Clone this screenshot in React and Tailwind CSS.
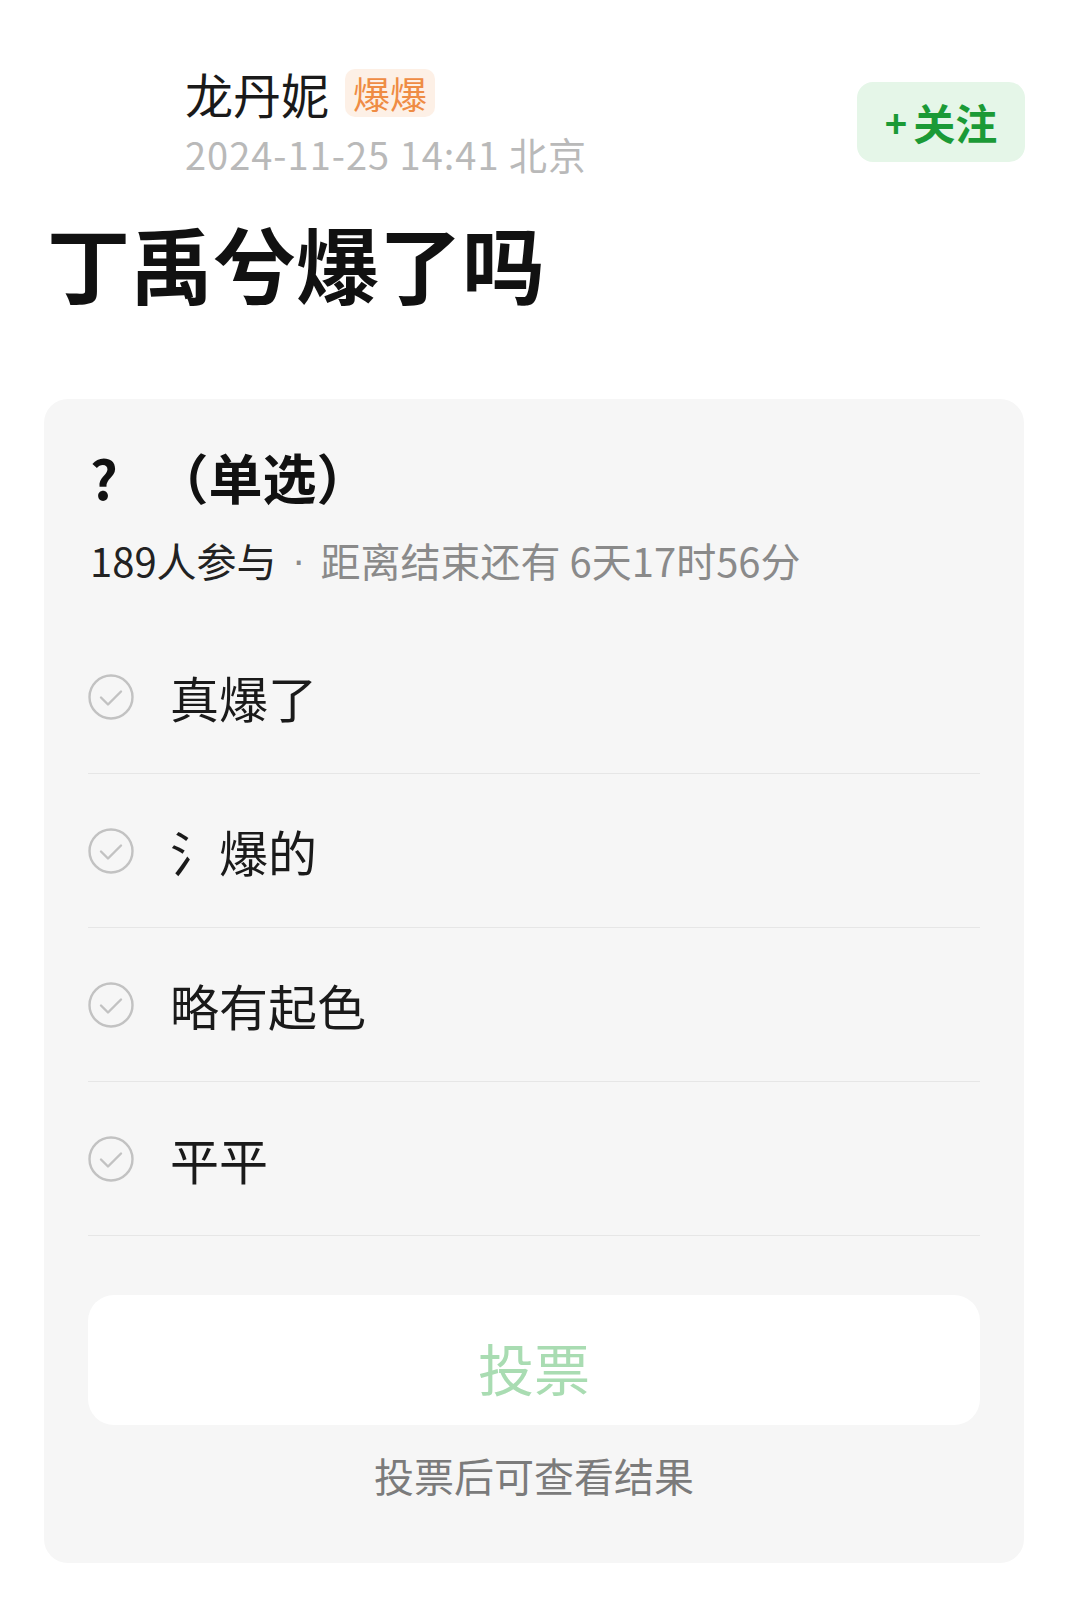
import React from "react";

const options = ["真爆了", "氵爆的", "略有起色", "平平"];

const CheckCircle = () => (
  <svg width="46" height="46" viewBox="0 0 46 46" fill="none">
    <circle cx="23" cy="23" r="21.5" stroke="#c2c2c2" strokeWidth="2.4" />
    <path
      d="M13 23.5 L20 30.5 L33 17.5"
      stroke="#c2c2c2"
      strokeWidth="2.4"
      strokeLinecap="round"
      strokeLinejoin="round"
    />
  </svg>
);

const App = () => {
  return (
    <div className="w-[1068px] min-h-[1602px] bg-white font-['Noto_Sans_CJK_SC',sans-serif] text-[#1a1a1a]">
      {/* header */}
      <div className="flex items-start pt-[64px] pl-[49px] pr-[43px]">
        <div className="w-[112px] h-[112px] shrink-0" />
        <div className="ml-[24px] flex-1">
          <div className="flex items-center h-[58px]">
            <span className="text-[48px] leading-[58px]">龙丹妮</span>
            <span className="ml-[16px] px-[8px] rounded-[10px] bg-[#fdf0e6] text-[#ef8c44] text-[37px] leading-[48px]">
              爆爆
            </span>
          </div>
          <div className="mt-[10px] text-[38px] leading-[44px] tracking-[1px] text-[#b9b9b9]">
            2024-11-25 14:41 北京
          </div>
        </div>
        <button className="mt-[18px] w-[168px] h-[80px] rounded-[16px] bg-[#e5f6e8] text-[#1b9a36] font-bold text-[42px] leading-none flex items-center justify-center">
          <span className="text-[38px] mr-[6px]">+</span>关注
        </button>
      </div>

      {/* title */}
      <h1 className="mt-[41px] pl-[47px] text-[83px] leading-[90px] font-bold text-[#111]">
        丁禹兮爆了吗
      </h1>

      {/* vote card */}
      <div className="mt-[92px] mx-[44px] rounded-[24px] bg-[#f6f6f6] pt-[46px] pb-[64px] px-[44px]">
        <div className="text-[54px] leading-[64px] font-bold text-[#111] pl-[2px]">
          ?&nbsp;&nbsp;&nbsp;（单选）
        </div>
        <div className="mt-[27px] text-[40px] leading-[48px] pl-[2px] flex items-center">
          <span className="text-[#222]">189人参与</span>
          <span className="inline-block w-[44px] text-center text-[#8a8a8a] font-['Liberation_Sans',sans-serif]">·</span>
          <span className="text-[#8a8a8a]">距离结束还有 6天17时56分</span>
        </div>

        <div className="mt-[36px]">
          {options.map((o) => (
            <div
              key={o}
              className="h-[154px] flex items-center border-b border-[#e6e6e6]"
            >
              <CheckCircle />
              <span className="ml-[36px] text-[49px] leading-none text-[#1a1a1a]">
                {o}
              </span>
            </div>
          ))}
        </div>

        <button className="mt-[59px] w-full h-[130px] pt-[14px] rounded-[26px] bg-white text-[56px] text-[#a9dcb2] flex items-center justify-center">
          投票
        </button>
        <div className="mt-[26px] text-center text-[40px] leading-[48px] text-[#7b7b7b]">
          投票后可查看结果
        </div>
      </div>
    </div>
  );
};

export default App;
